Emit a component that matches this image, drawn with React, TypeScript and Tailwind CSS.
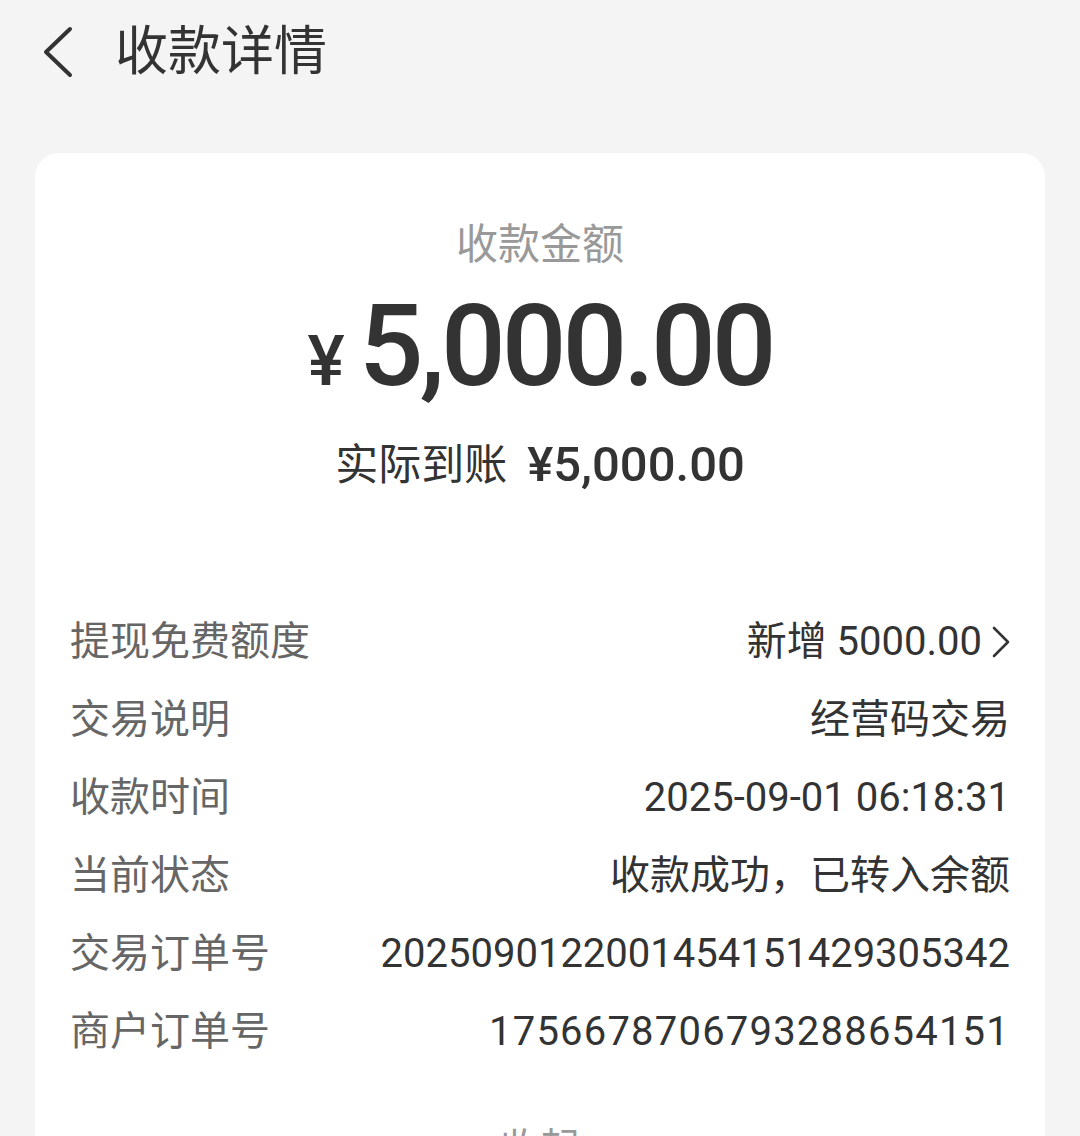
import React from "react";

const rows: { label: string; value: string; arrow?: boolean; wide?: boolean }[] = [
  { label: "提现免费额度", value: "新增 5000.00", arrow: true },
  { label: "交易说明", value: "经营码交易" },
  { label: "收款时间", value: "2025-09-01 06:18:31" },
  { label: "当前状态", value: "收款成功，已转入余额" },
  { label: "交易订单号", value: "2025090122001454151429305342" },
  { label: "商户订单号", value: "1756678706793288654151", wide: true },
];

export default function App() {
  return (
    <div
      className="w-[1080px] h-[1136px] overflow-hidden bg-[#f4f4f4] text-[#333]"
      style={{ fontFamily: "Roboto, 'Noto Sans CJK SC', sans-serif" }}
    >
      {/* header */}
      <div className="h-[104px] flex items-center pl-[40px]">
        <svg width="34" height="52" viewBox="0 0 34 52" fill="none">
          <path d="M30 3 L6 26 L30 49" stroke="#333" strokeWidth="4" strokeLinecap="round" strokeLinejoin="round" />
        </svg>
        <h1 className="ml-[41px] text-[53px] leading-none font-normal text-[#333]">收款详情</h1>
      </div>

      {/* card */}
      <div className="mx-[35px] mt-[49px] bg-white rounded-[24px] px-[35px] pt-[68px] pb-[40px]">
        <div className="text-center text-[42px] leading-[48px] text-[#999]">收款金额</div>
        <div className="mt-[20px] flex items-baseline justify-center font-medium text-[#333] leading-none">
          <span className="text-[70px] mr-[14px]">¥</span>
          <span className="text-[114px] tracking-[-4px]">5,000.00</span>
        </div>
        <div className="mt-[38px] flex items-center justify-center text-[43px] leading-[48px] text-[#333]">
          <span>实际到账</span>
          <span className="ml-[20px] font-medium text-[49px]">¥5,000.00</span>
        </div>

        <div className="mt-[114px]">
          {rows.map((r) => (
            <div key={r.label} className="h-[78px] flex items-center justify-between text-[40px]">
              <span className="text-[#666]">{r.label}</span>
              <span className={"flex items-center text-[#333]" + (r.wide ? " tracking-[1.2px]" : "")}>
                {r.value}
                {r.arrow && (
                  <svg width="22" height="34" viewBox="0 0 22 34" fill="none" className="ml-[8px] -mr-[2px]">
                    <path d="M4 3 L18 17 L4 31" stroke="#333" strokeWidth="2.6" strokeLinecap="round" strokeLinejoin="round" />
                  </svg>
                )}
              </span>
            </div>
          ))}
        </div>

        <div className="mt-[54px] text-center text-[40px] leading-[48px] text-[#999]">收起</div>
      </div>
    </div>
  );
}
